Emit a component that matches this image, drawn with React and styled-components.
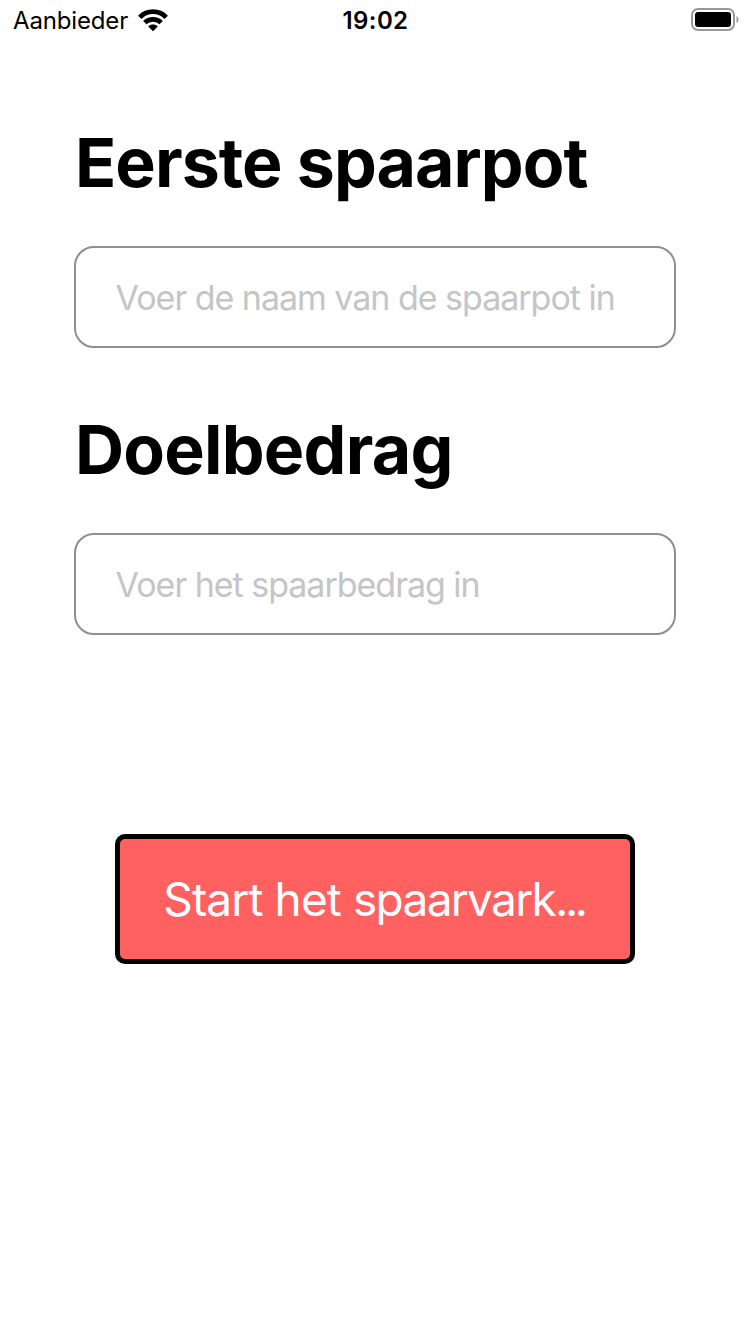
import React from "react";
import styled, { createGlobalStyle } from "styled-components";

const GlobalStyle = createGlobalStyle`
  *, *::before, *::after { box-sizing: border-box; }
  body { margin: 0; background: #fff; color: #000; font-family: Inter, "Liberation Sans", sans-serif; }
`;
const Screen = styled.div`
  width: 750px;
  height: 1334px;
  background: #fff;
  overflow: hidden;
`;
const StatusBar = styled.header`
  display: grid;
  grid-template-columns: 1fr auto 1fr;
  align-items: center;
  height: 40px;
  padding: 0 11px 0 13px;
`;
const Carrier = styled.div`
  display: flex;
  align-items: center;
  gap: 10px;
  font-size: 24px;
  line-height: 38px;
  letter-spacing: -0.15px;
`;
const StatusText = styled.span`
  padding-top: 2px;
`;
const Clock = styled.time`
  padding: 2px 1px 0 0;
  font-size: 24px;
  font-weight: 600;
  line-height: 38px;
  letter-spacing: 0.4px;
`;
const BatteryIcon = styled.svg`
  display: block;
  justify-self: end;
`;
const Form = styled.main`
  display: flex;
  flex-direction: column;
  padding: 81px 74px 0;
`;
const Field = styled.label`
  display: flex;
  flex-direction: column;
  height: 287px;
`;
const Title = styled.span`
  height: 82px;
  margin-bottom: 43px;
  padding-left: 1px;
  font-size: 68px;
  font-weight: 700;
  line-height: 82px;
  white-space: nowrap;
  letter-spacing: ${(p) => p.$spacing};
`;
const Input = styled.input`
  width: 602px;
  height: 102px;
  padding: 0 38px 0 39.5px;
  border: 2px solid #8e8e93;
  border-radius: 20px;
  background: #fff;
  font-family: inherit;
  font-size: 34px;
  letter-spacing: -1.02px;
  outline: none;
  &::placeholder { color: #c5c5c7; opacity: 1; }
`;
const StartButton = styled.button`
  align-self: center;
  width: 520px;
  height: 130px;
  margin-top: 139px;
  padding: 0 2px 0 0;
  border: 5px solid #000;
  border-radius: 10px;
  background: #ff6161;
  color: #fff;
  font-family: inherit;
  font-size: 46px;
  letter-spacing: -0.9px;
  white-space: nowrap;
`;
const Tracked = styled.span`
  letter-spacing: ${(p) => p.$spacing};
`;

export default function App() {
  return (
    <Screen>
      <GlobalStyle />
      <StatusBar>
        <Carrier>
          <StatusText>Aanbieder</StatusText>
          <svg width="31" height="24" viewBox="0 0 31 24" fill="none" stroke="#000" strokeWidth="4.8">
            <path d="M1.8 9.3C9 1.8 21 1.8 28.2 9.3M6.8 14.6C11.2 10.2 18.8 10.2 23.2 14.6" />
            <path d="M15 23.2l-4.8-4.8c2.6-2.4 7-2.4 9.6 0z" fill="#000" stroke="none" />
          </svg>
        </Carrier>
        <Clock>19:02</Clock>
        <BatteryIcon width="48" height="24" viewBox="0 0 48 24">
          <rect x="1" y="1" width="42" height="21" rx="6" fill="none" stroke="#999" strokeWidth="2" />
          <rect x="4" y="4" width="36" height="15" rx="3" />
          <path d="M45.5 8c2.6 1 2.6 6 0 7z" fill="#999" />
        </BatteryIcon>
      </StatusBar>
      <Form>
        <Field>
          <Title $spacing="-0.95px">Eerste spaarpot</Title>
          <Input placeholder="Voer de naam van de spaarpot in" />
        </Field>
        <Field>
          <Title $spacing="-0.75px">Doelbedrag</Title>
          <Input placeholder="Voer het spaarbedrag in" />
        </Field>
        <StartButton type="button">
          Start het <Tracked $spacing="-1.7px">spaarvark</Tracked>
          <Tracked $spacing="-3.4px">...</Tracked>
        </StartButton>
      </Form>
    </Screen>
  );
}
